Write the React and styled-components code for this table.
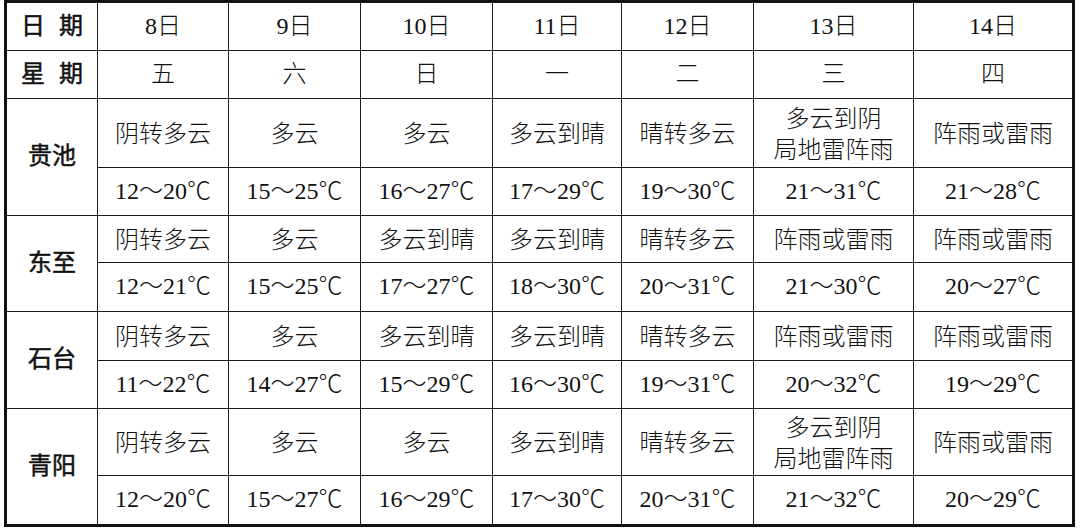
import styled, { createGlobalStyle } from "styled-components";

const GlobalStyle = createGlobalStyle`
  html, body {
    margin: 0;
    padding: 0;
    background: #ffffff;
  }
  body {
    width: 1080px;
    height: 529px;
    overflow: hidden;
    font-family: "Liberation Serif", "Noto Sans CJK SC", serif;
    color: #111;
  }
`;

const columns = [92, 131, 132, 132, 129, 132, 160, 160];

const dates = ["8日", "9日", "10日", "11日", "12日", "13日", "14日"];
const weekdays = ["五", "六", "日", "一", "二", "三", "四"];

const cities = [
  {
    name: "贵池",
    heights: [69, 48],
    weather: [
      "阴转多云",
      "多云",
      "多云",
      "多云到晴",
      "晴转多云",
      ["多云到阴", "局地雷阵雨"],
      "阵雨或雷雨",
    ],
    temps: ["12～20℃", "15～25℃", "16～27℃", "17～29℃", "19～30℃", "21～31℃", "21～28℃"],
  },
  {
    name: "东至",
    heights: [47, 49],
    weather: ["阴转多云", "多云", "多云到晴", "多云到晴", "晴转多云", "阵雨或雷雨", "阵雨或雷雨"],
    temps: ["12～21℃", "15～25℃", "17～27℃", "18～30℃", "20～31℃", "21～30℃", "20～27℃"],
  },
  {
    name: "石台",
    heights: [49, 48],
    weather: ["阴转多云", "多云", "多云到晴", "多云到晴", "晴转多云", "阵雨或雷雨", "阵雨或雷雨"],
    temps: ["11～22℃", "14～27℃", "15～29℃", "16～30℃", "19～31℃", "20～32℃", "19～29℃"],
  },
  {
    name: "青阳",
    heights: [67, 50],
    weather: [
      "阴转多云",
      "多云",
      "多云",
      "多云到晴",
      "晴转多云",
      ["多云到阴", "局地雷阵雨"],
      "阵雨或雷雨",
    ],
    temps: ["12～20℃", "15～27℃", "16～29℃", "17～30℃", "20～31℃", "21～32℃", "20～29℃"],
  },
];

const App = () => {
  return (
    <Page>
      <GlobalStyle />
      <Table>
        <colgroup>
          {columns.map((w, i) => (
            <col key={i} style={{ width: w }} />
          ))}
        </colgroup>
        <tbody>
          <Row $h={49}>
            <Label>
              日<Gap />期
            </Label>
            {dates.map((d) => (
              <Cell key={d}>{d}</Cell>
            ))}
          </Row>
          <Row $h={48}>
            <Label>
              星<Gap />期
            </Label>
            {weekdays.map((d) => (
              <Cell key={d}>{d}</Cell>
            ))}
          </Row>
          {cities.map((city) => (
            <CityRows key={city.name} city={city} />
          ))}
        </tbody>
      </Table>
    </Page>
  );
};

const CityRows = ({ city }) => (
  <>
    <Row $h={city.heights[0]}>
      <Label rowSpan={2}>{city.name}</Label>
      {city.weather.map((w, i) => (
        <Cell key={i} $pad>
          {Array.isArray(w) ? (
            <Lines>
              {w.map((line) => (
                <span key={line}>{line}</span>
              ))}
            </Lines>
          ) : (
            w
          )}
        </Cell>
      ))}
    </Row>
    <Row $h={city.heights[1]}>
      {city.temps.map((t, i) => (
        <Cell key={i}>{t}</Cell>
      ))}
    </Row>
  </>
);

export default App;

const Page = styled.div`
  padding: 0 0 0 4px;
`;

const Table = styled.table`
  border-collapse: collapse;
  table-layout: fixed;
  width: 1071px;
  border: 3px solid #111;
`;

const Row = styled.tr`
  height: ${(p) => p.$h}px;
`;

const Cell = styled.td`
  border: 1.5px solid #1a1a1a;
  padding: ${(p) => (p.$pad ? "3px 0 0" : "0")};
  text-align: center;
  vertical-align: middle;
  font-size: 24px;
  font-weight: 300;
  line-height: 1.3;
  white-space: nowrap;
`;

const Label = styled(Cell)`
  font-weight: 400;
  -webkit-text-stroke: 0.5px #111;
`;

const Gap = styled.span`
  display: inline-block;
  width: 14px;
`;

const Lines = styled.div`
  display: flex;
  flex-direction: column;
  align-items: center;
  line-height: 31px;
`;
